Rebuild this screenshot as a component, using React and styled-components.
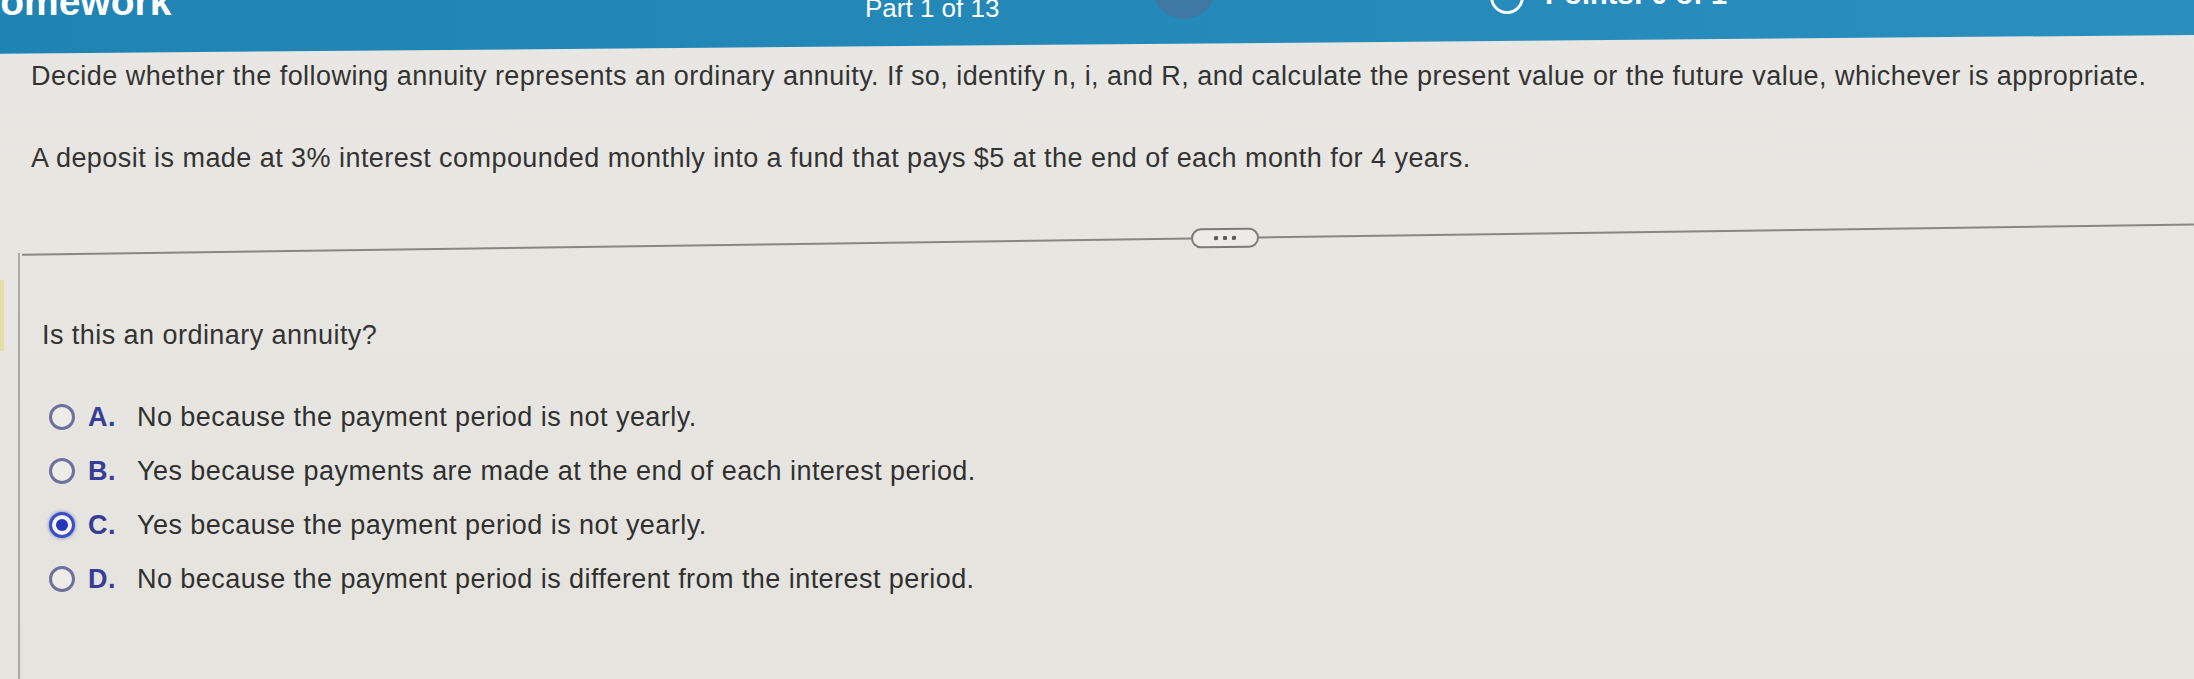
import React from "react";
import styled, { createGlobalStyle } from "styled-components";

const GlobalStyle = createGlobalStyle`
  html, body {
    margin: 0;
    padding: 0;
    overflow: hidden;
    background: #e6e5e0;
  }
  body {
    font-family: "Liberation Sans", Arial, sans-serif;
  }
  * {
    box-sizing: border-box;
  }
`;

const Page = styled.div`
  min-height: 100vh;
  background: linear-gradient(180deg, #e8e7e3 0%, #e4e3de 100%);
`;

// the photo is tilted, so the bar's lower edge runs uphill to the right
const Header = styled.header`
  display: grid;
  grid-template-columns: 893px 287px 338px auto;
  align-items: start;
  height: 54px;
  margin-left: -28px;
  background: linear-gradient(90deg, #1f83b3 0%, #2489b8 50%, #2a8fbe 100%);
  color: #fff;
  overflow: hidden;
  clip-path: polygon(0 0, 100% 0, 100% 35px, 0 100%);
`;

const Title = styled.div`
  margin-top: -18px;
  font-size: 39px;
  font-weight: 700;
  line-height: 1;
  white-space: nowrap;
`;

const PartLabel = styled.div`
  margin-top: -5px;
  font-size: 26px;
  line-height: 1;
  white-space: nowrap;
`;

const NavButton = styled.div`
  width: 64px;
  height: 64px;
  margin-top: -45px;
  border-radius: 50%;
  background: #3d79a2;
`;

const Status = styled.div`
  display: flex;
  align-items: flex-start;
  gap: 21px;
`;

const StatusRing = styled.div`
  width: 34px;
  height: 34px;
  margin-top: -20px;
  border: 3px solid #fff;
  border-radius: 50%;
`;

const Points = styled.div`
  margin-top: -20px;
  font-size: 29px;
  font-weight: 700;
  line-height: 1;
  white-space: nowrap;
`;

const Stem = styled.section`
  display: flex;
  flex-direction: column;
  gap: 50px;
  padding: 6px 0 0 31px;
`;

const Text = styled.p`
  margin: 0;
  font-size: 27px;
  line-height: 32px;
  letter-spacing: 0.45px;
  color: #333;
  white-space: nowrap;
`;

const Divider = styled.div`
  display: flex;
  align-items: center;
  height: 20px;
  margin: 54px 0 0 22px;
  transform: rotate(-0.8deg);
  transform-origin: 1203px 10px;
`;

const Rule = styled.div`
  flex: ${(p) => (p.$width ? `0 0 ${p.$width}px` : "1")};
  height: 2px;
  background: #878682;
`;

const MorePill = styled.div`
  display: flex;
  align-items: center;
  justify-content: center;
  gap: 5px;
  width: 68px;
  height: 20px;
  border: 2px solid #7c7b77;
  border-radius: 10px;
  background: #ecebe8;
`;

const Dot = styled.span`
  width: 4px;
  height: 4px;
  border-radius: 1px;
  background: #5b5b5b;
`;

const AnswerPanel = styled.section`
  margin: 5px 0 0 18px;
  padding-top: 27px;
  min-height: 480px;
  border-left: 2px solid #aaa9a4;
`;

const PromptRow = styled.div`
  margin-left: -20px;
  padding: 39px 0 0 38px;
  border-left: 4px solid #e6dca6;
  font-size: 27px;
  line-height: 32px;
  letter-spacing: 0.45px;
  color: #333;
`;

const Options = styled.div`
  margin-top: 39px;
`;

const Option = styled.div`
  display: flex;
  align-items: center;
  height: 54px;
  padding-left: 29px;
  font-size: 27px;
  line-height: 32px;
  letter-spacing: 0.45px;
  color: #303030;
  white-space: nowrap;
`;

const Radio = styled.span`
  position: relative;
  flex: 0 0 26px;
  height: 26px;
  margin-right: 13px;
  border-radius: 50%;
  border: 3px solid ${(p) => (p.$checked ? "#3c4fc2" : "#6f719d")};
  background: ${(p) => (p.$checked ? "#f4f4f8" : "#edece8")};
  box-shadow: ${(p) => (p.$checked ? "0 0 3px 1px rgba(70, 90, 200, 0.45)" : "none")};

  &::after {
    content: "";
    display: ${(p) => (p.$checked ? "block" : "none")};
    position: absolute;
    inset: 4px;
    border-radius: 50%;
    background: #2537b8;
  }
`;

const Letter = styled.span`
  flex: 0 0 49px;
  font-weight: 700;
  color: #373d97;
`;

const choices = [
  { key: "A", text: "No because the payment period is not yearly." },
  { key: "B", text: "Yes because payments are made at the end of each interest period." },
  { key: "C", text: "Yes because the payment period is not yearly.", checked: true },
  { key: "D", text: "No because the payment period is different from the interest period." },
];

export default function App() {
  return (
    <>
      <GlobalStyle />
      <Page>
        <Header>
          <Title>Homework</Title>
          <PartLabel>Part 1 of 13</PartLabel>
          <NavButton />
          <Status>
            <StatusRing />
            <Points>Points: 0 of 1</Points>
          </Status>
        </Header>

        <Stem>
          <Text>
            Decide whether the following annuity represents an ordinary annuity. If so, identify n, i, and R, and
            calculate the present value or the future value, whichever is appropriate.
          </Text>
          <Text>A deposit is made at 3% interest compounded monthly into a fund that pays $5 at the end of each month for 4 years.</Text>
        </Stem>

        <Divider>
          <Rule $width={1169} />
          <MorePill>
            <Dot />
            <Dot />
            <Dot />
          </MorePill>
          <Rule />
        </Divider>

        <AnswerPanel>
          <PromptRow>Is this an ordinary annuity?</PromptRow>

          <Options>
            {choices.map((c) => (
              <Option key={c.key}>
                <Radio $checked={c.checked} />
                <Letter>{c.key}.</Letter>
                {c.text}
              </Option>
            ))}
          </Options>
        </AnswerPanel>
      </Page>
    </>
  );
}
